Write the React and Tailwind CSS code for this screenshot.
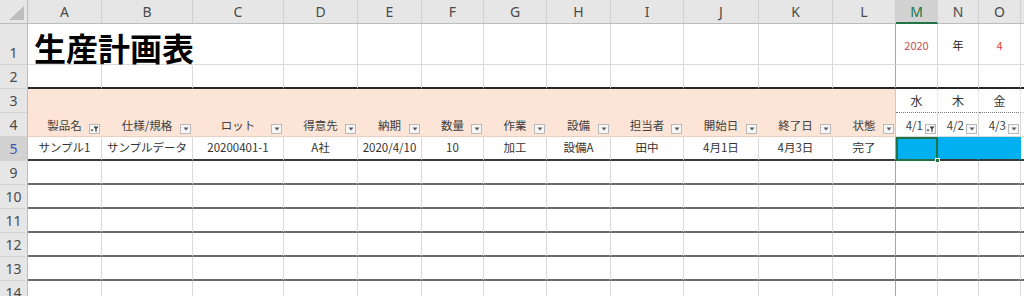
import React from "react";

const cols = [
  "w-[74px]", "w-[91px]", "w-[91px]", "w-[74px]", "w-[64px]", "w-[62px]", "w-[63px]",
  "w-[64px]", "w-[73px]", "w-[75px]", "w-[74px]", "w-[63px]", "w-[42px]", "w-[41px]", "w-[42px]",
];
const letters = ["A", "B", "C", "D", "E", "F", "G", "H", "I", "J", "K", "L", "M", "N", "O"];

const grid = (i) =>
  i === 11
    ? "border-r border-b border-r-[#a6a6a6] border-b-[#dadada]"
    : "border-r border-b border-r-[#dadada] border-b-[#dadada]";

function FilterBtn({ active }) {
  return (
    <span className="absolute right-[1px] bottom-[2px] w-[11px] h-[10px] border border-[#b9b9b9] bg-[#f7f7f7] flex items-center justify-center">
      {active ? (
        <svg width="9" height="8" viewBox="0 0 9 8">
          <path d="M3.5 1.5h5L6.6 4v3.2L5.4 6.4V4z" fill="#404040" />
          <path d="M0.5 4.5h3L2 6.5z" fill="#404040" />
        </svg>
      ) : (
        <svg width="6" height="4" viewBox="0 0 6 4">
          <path d="M0.5 0.5h5L3 3.5z" fill="#5a5a5a" />
        </svg>
      )}
    </span>
  );
}

function RowHead({ n, active }) {
  return (
    <div
      className={`w-[28px] shrink-0 flex items-end justify-center pb-[4px] border-r border-b border-r-[#bdbdbd] border-b-[#d2d2d2] text-[14px] leading-none ${
        active ? "bg-[#d2d2d2] text-[#3b56b0]" : "bg-[#e6e6e6] text-[#4a4a4a]"
      }`}
      style={{ fontFamily: '"Noto Sans", sans-serif' }}
    >
      {n}
    </div>
  );
}

function Filler({ cls = "border-b border-b-[#dadada]" }) {
  return <div className={`flex-1 ${cls}`} />;
}

const headers = ["製品名", "仕様/規格", "ロット", "得意先", "納期", "数量", "作業", "設備", "担当者", "開始日", "終了日", "状態"];
const data = ["サンプル1", "サンプルデータ", "20200401-1", "A社", "2020/4/10", "10", "加工", "設備A", "田中", "4月1日", "4月3日", "完了"];

export default function App() {
  return (
    <div
      className="w-[1024px] h-[296px] overflow-hidden bg-white text-[#333]"
      style={{ fontFamily: '"Noto Sans CJK JP", "Noto Sans", sans-serif' }}
    >
      {/* column header row */}
      <div className="flex h-[24px]">
        <div className="w-[28px] shrink-0 relative bg-[#e6e6e6] border-r border-b border-r-[#bdbdbd] border-b-[#bdbdbd]">
          <svg className="absolute right-[3px] bottom-[3px]" width="15" height="14" viewBox="0 0 15 14">
            <path d="M15 0V14H0z" fill="#bdbdbd" />
          </svg>
        </div>
        {letters.map((l, i) => (
          <div
            key={l}
            className={`${cols[i]} shrink-0 flex items-center justify-center text-[14px] border-r border-r-[#d0d0d0] ${
              i === 12
                ? "bg-[#d2d2d2] text-[#217346] border-b-2 border-b-[#217346]"
                : "bg-[#e6e6e6] text-[#4a4a4a] border-b border-b-[#bdbdbd]"
            }`}
            style={{ fontFamily: '"Noto Sans", sans-serif' }}
          >
            {l}
          </div>
        ))}
        <Filler cls="bg-[#e6e6e6] border-b border-b-[#bdbdbd]" />
      </div>

      {/* row 1 */}
      <div className="flex h-[41px] relative">
        <RowHead n="1" />
        {cols.map((c, i) => {
          let cls = grid(i);
          if (i === 0 || i === 1) cls = "border-r border-b border-r-white border-b-[#dadada]";
          return (
            <div key={i} className={`${c} shrink-0 flex items-center justify-center ${cls}`}>
              {i === 12 && <span className="text-[11px] text-[#c8504d] pt-[2px]">2020</span>}
              {i === 13 && <span className="text-[11px] text-[#222] pt-[2px]">年</span>}
              {i === 14 && <span className="text-[11px] text-[#e0403a] pt-[2px]">4</span>}
            </div>
          );
        })}
        <Filler />
        <span className="absolute z-10 left-[34px] bottom-[1px] w-max whitespace-nowrap text-[32px] leading-[33px] font-bold text-black">
          生産計画表
        </span>
      </div>

      {/* row 2 */}
      <div className="flex h-[24px]">
        <RowHead n="2" />
        {cols.map((c, i) => (
          <div
            key={i}
            className={`${c} shrink-0 border-r border-b-2 ${i === 11 ? "border-r-[#a6a6a6]" : "border-r-[#dadada]"} border-b-[#262626]`}
          />
        ))}
        <Filler cls="border-b-2 border-b-[#262626]" />
      </div>

      {/* row 3 */}
      <div className="flex h-[24px]">
        <RowHead n="3" />
        {cols.map((c, i) =>
          i < 12 ? (
            <div
              key={i}
              className={`${c} shrink-0 bg-[#fce4d6] border-r border-b ${i === 11 ? "border-r-[#c9c9c9]" : "border-r-[#fce4d6]"} border-b-[#fce4d6]`}
            />
          ) : (
            <div
              key={i}
              className={`${c} shrink-0 flex items-center justify-center text-[12px] text-[#333] border-r border-r-[#dadada] border-b border-dotted border-b-[#7a7a7a]`}
            >
              {["水", "木", "金"][i - 12]}
            </div>
          )
        )}
        <Filler />
      </div>

      {/* row 4 */}
      <div className="flex h-[24px]">
        <RowHead n="4" />
        {cols.map((c, i) =>
          i < 12 ? (
            <div
              key={i}
              className={`${c} shrink-0 relative flex items-end justify-center pb-[3px] bg-[#fce4d6] text-[11.5px] leading-[16px] text-[#404040] border-r border-b ${
                i === 11 ? "border-r-[#c9c9c9]" : "border-r-[#fce4d6]"
              } border-b-[#e8cfc0]`}
            >
              {headers[i]}
              <FilterBtn active={i === 0} />
            </div>
          ) : (
            <div
              key={i}
              className={`${c} shrink-0 relative flex items-end justify-end pr-[14px] pb-[3px] text-[11.5px] leading-[16px] text-[#404040] ${grid(i)}`}
            >
              {["4/1", "4/2", "4/3"][i - 12]}
              <FilterBtn active={i === 12} />
            </div>
          )
        )}
        <Filler />
      </div>

      {/* row 5 */}
      <div className="flex h-[24px]">
        <RowHead n="5" active />
        {cols.map((c, i) => {
          if (i === 12)
            return (
              <div key={i} className={`${c} shrink-0 relative bg-[#00b0f0] border-2 border-[#217346]`}>
                <span className="absolute -right-[4px] -bottom-[4px] w-[5px] h-[5px] bg-[#217346] border border-white" />
              </div>
            );
          if (i > 12)
            return (
              <div
                key={i}
                className={`${c} shrink-0 bg-[#00b0f0] border-r border-b-2 border-r-[#00b0f0] border-b-[#3a3a3a]`}
              />
            );
          return (
            <div
              key={i}
              className={`${c} shrink-0 flex items-center justify-center text-[11.5px] text-[#333] border-r border-b-2 ${
                i === 11 ? "border-r-[#a6a6a6]" : "border-r-[#dadada]"
              } border-b-[#3a3a3a]`}
            >
              {data[i]}
            </div>
          );
        })}
        <Filler cls="border-b-2 border-b-[#3a3a3a]" />
      </div>

      {/* rows 9-13 */}
      {["9", "10", "11", "12", "13"].map((n) => (
        <div key={n} className="flex h-[24px]">
          <RowHead n={n} />
          {cols.map((c, i) => (
            <div
              key={i}
              className={`${c} shrink-0 border-r border-b-2 ${i === 11 ? "border-r-[#a6a6a6]" : "border-r-[#dadada]"} border-b-[#6a6a6a]`}
            />
          ))}
          <Filler cls="border-b-2 border-b-[#6a6a6a]" />
        </div>
      ))}

      {/* row 14 */}
      <div className="flex h-[24px]">
        <RowHead n="14" />
        {cols.map((c, i) => (
          <div key={i} className={`${c} shrink-0 ${grid(i)}`} />
        ))}
        <Filler />
      </div>
    </div>
  );
}
